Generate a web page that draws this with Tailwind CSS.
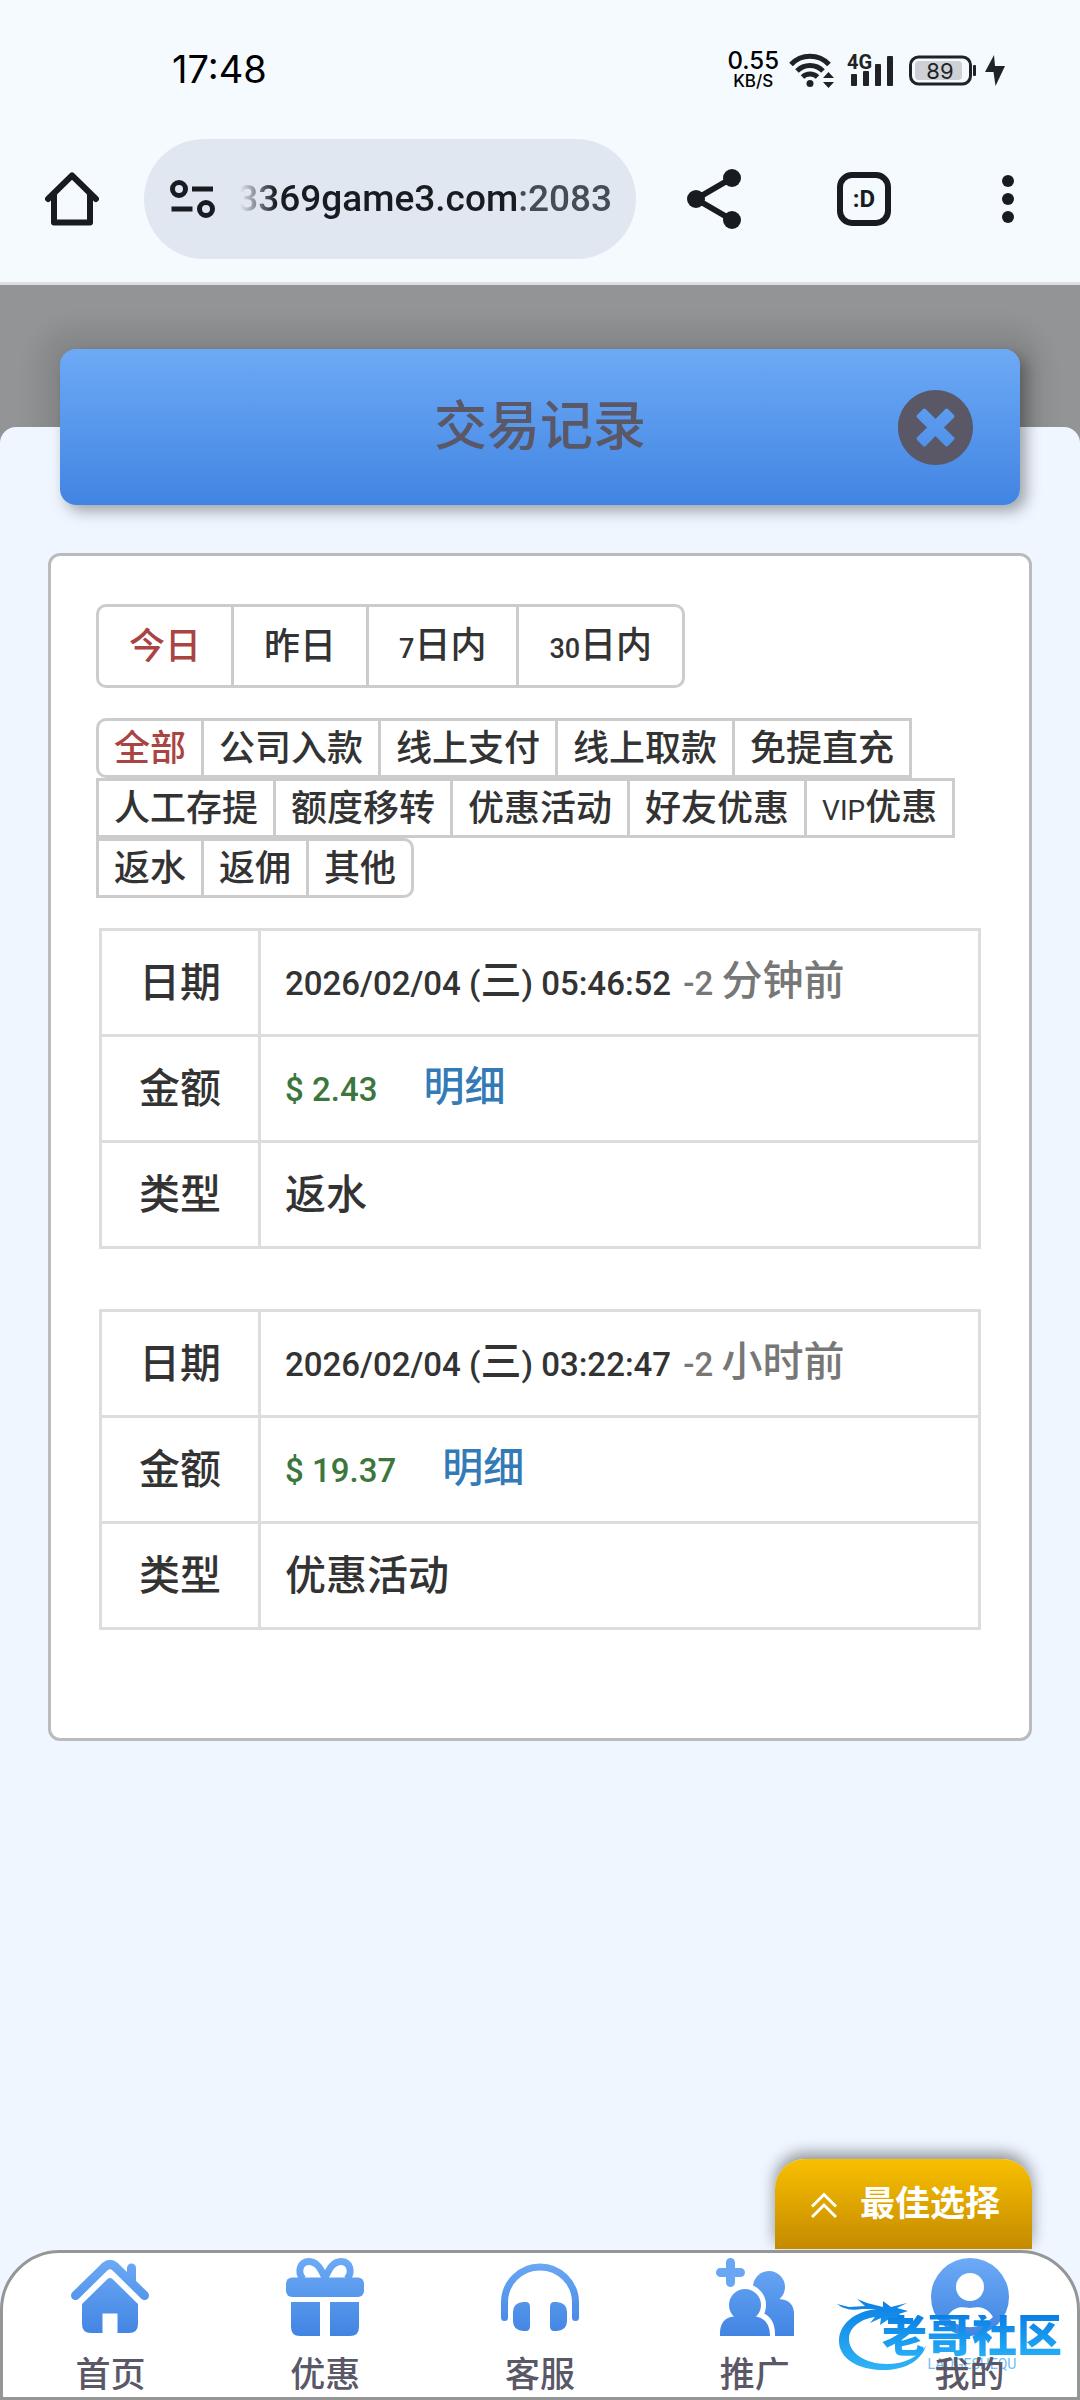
<!DOCTYPE html>
<html lang="zh-CN">
<head>
<meta charset="utf-8">
<meta name="viewport" content="width=device-width, initial-scale=1">
<title>交易记录</title>
<script src="https://cdn.jsdelivr.net/npm/@tailwindcss/browser@4"></script>
</head>
<body class="flex min-h-screen flex-col bg-[#f5faff] font-[Roboto,'Noto_Sans_CJK_SC',sans-serif] font-medium text-[#333333]">

<!-- Status bar -->
<div class="flex h-[139px] shrink-0 items-center justify-between pr-[75px] pl-[172px] text-black">
  <span class="font-[Inter,sans-serif] text-[38px] font-normal">17:48</span>
  <div class="flex items-center text-[#1f2226]">
    <div class="mr-[10px] flex flex-col items-center font-[Inter,sans-serif] text-black">
      <span class="text-[24px] leading-[22px]">0.55</span>
      <span class="text-[17px] leading-[18px]">KB/S</span>
    </div>
    <svg class="mr-3 h-9 w-[46px]" viewBox="0 0 46 36" fill="none" stroke="currentColor" stroke-width="5" aria-hidden="true">
      <path d="M2 12.500 A26 26 0 0 1 40 12.500"/><path d="M8 19 A18 18 0 0 1 34 19"/><path d="M13.500 25 A11 11 0 0 1 28.500 25"/>
      <circle cx="21" cy="31.500" r="3.500" fill="currentColor" stroke="none"/>
      <path d="M34 26 L39.500 20 L45 26Z M34 30 L39.500 36 L45 30Z" fill="currentColor" stroke="none"/>
    </svg>
    <svg class="mr-[14px] h-9 w-[48px] overflow-visible" viewBox="0 0 48 36" fill="currentColor" aria-hidden="true">
      <text x="0" y="17" font-family="Roboto" font-weight="700" font-size="20">4G</text>
      <rect x="4" y="22" width="6" height="12" rx="1"/><rect x="16" y="19" width="6" height="15" rx="1"/><rect x="28" y="12" width="6" height="22" rx="1"/><rect x="40" y="4" width="6" height="30" rx="1"/>
    </svg>
    <svg class="mr-2 h-9 w-[68px]" viewBox="0 0 68 36" fill="none" aria-hidden="true">
      <rect x="1.500" y="5" width="60" height="27" rx="8" stroke="#1f2226" stroke-width="3"/>
      <rect x="6" y="9" width="47" height="19" rx="4" fill="#cdd1d5"/>
      <rect x="64" y="13" width="3" height="11" rx="1" fill="#1f2226"/>
      <text x="31" y="27" text-anchor="middle" font-family="Inter" font-weight="400" font-size="22" fill="#1f2226">89</text>
    </svg>
    <svg class="h-9 w-5" viewBox="0 0 20 36" fill="currentColor" aria-hidden="true"><path d="M9 3 L0 20 H8.500 L10.500 34 L20 14 H10Z"/></svg>
  </div>
</div>

<!-- Browser toolbar -->
<div class="flex shrink-0 items-center border-b-3 border-[#dce0e5] pr-[60px] pb-[23px] pl-[45px] text-[#181c20]">
  <button type="button" aria-label="主页">
    <svg class="size-[54px]" viewBox="0 0 54 54" fill="none" stroke="currentColor" stroke-width="6" stroke-linejoin="round" stroke-linecap="round"><path d="M3 27 L27 3.500 L51 27"/><path d="M9 22 V50.500 H45 V22"/></svg>
  </button>
  <button type="button" class="mr-[51px] ml-[45px] flex h-[120px] min-w-0 flex-1 items-center rounded-full bg-[#e1e7f0] pr-6 pl-[26px]">
    <svg class="h-10 w-[46px] shrink-0" viewBox="0 0 46 40" fill="none" stroke="currentColor" stroke-width="5" aria-hidden="true"><circle cx="9" cy="10" r="6.500"/><circle cx="36" cy="30" r="6.500"/><path d="M22 10 H43 M1.500 30 H22.500"/></svg>
    <span class="ml-6 flex min-w-0 flex-1 justify-end overflow-hidden text-[37px] leading-[48px] whitespace-nowrap [mask-image:linear-gradient(to_right,transparent,black_36px)]">3369game3.com<span class="text-[#454c55]">:2083</span></span>
  </button>
  <button type="button" aria-label="分享">
    <svg class="h-[60px] w-[54px]" viewBox="0 0 54 60" fill="currentColor"><path d="M9 30 L45 9 M9 30 L45 51" stroke="currentColor" stroke-width="6"/><circle cx="9" cy="30" r="9"/><circle cx="45" cy="9" r="9"/><circle cx="45" cy="51" r="9"/></svg>
  </button>
  <button type="button" class="mr-[105px] ml-24 flex size-[54px] items-center justify-center rounded-[15px] border-6 border-current text-[24px] leading-6 font-bold">:D</button>
  <button type="button" aria-label="更多">
    <svg class="h-12 w-6" viewBox="0 0 24 48" fill="currentColor"><circle cx="12" cy="6" r="6"/><circle cx="12" cy="24" r="6"/><circle cx="12" cy="42" r="6"/></svg>
  </button>
</div>

<main class="relative flex flex-1 flex-col bg-[#929496] pt-[142px]">
  <!-- Soft halo behind the title bar -->
  <div class="absolute inset-x-[60px] top-16 h-[156px] rounded-2xl shadow-[0_0_20px_24px_rgba(0,0,0,0.08)]"></div>

  <div class="relative flex flex-1 flex-col rounded-t-2xl bg-[#eff6ff]">
    <header class="mx-[60px] -mt-[78px] flex h-[156px] items-center rounded-2xl bg-linear-to-b from-[#6daaf6] to-[#4184e2] px-[47px] text-[#5a5867] shadow-[6px_6px_15px_rgba(0,0,0,0.35)]">
      <h1 class="flex-1 pl-[75px] text-center text-[53px] leading-[64px]">交易记录</h1>
      <button type="button" aria-label="关闭">
        <svg class="size-[75px]" viewBox="8 8 496 496" fill="currentColor"><path d="M256 8C119 8 8 119 8 256s111 248 248 248 248-111 248-248S393 8 256 8zm121.600 313.100c4.700 4.700 4.700 12.300 0 17L338 377.600c-4.700 4.700-12.300 4.700-17 0L256 312l-65.100 65.600c-4.700 4.700-12.300 4.700-17 0L134.400 338c-4.700-4.700-4.700-12.300 0-17l65.600-65-65.600-65.100c-4.700-4.700-4.700-12.300 0-17l39.600-39.600c4.700-4.700 12.300-4.700 17 0l65 65.700 65.100-65.600c4.700-4.700 12.300-4.700 17 0l39.600 39.600c4.700 4.700 4.700 12.300 0 17L312 256z"/></svg>
      </button>
    </header>

    <section class="mx-12 mt-12 rounded-xl border-3 border-[#b9bbbd] bg-white px-[45px] pt-12 pb-[108px]">
      <!-- Date range -->
      <div class="flex pl-[3px] text-[36px] leading-[48px]" role="group" aria-label="日期范围">
        <button type="button" class="-ml-[3px] h-[84px] rounded-l-[10px] border-3 border-[#cccccc] px-[30px] pt-[2px] text-[#a94442]" aria-pressed="true">今日</button>
        <button type="button" class="-ml-[3px] h-[84px] border-3 border-[#cccccc] px-[30px] pt-[2px]">昨日</button>
        <button type="button" class="-ml-[3px] h-[84px] border-3 border-[#cccccc] px-[30px] pt-[2px]"><span class="text-[27px]">7</span>日内</button>
        <button type="button" class="-ml-[3px] h-[84px] rounded-r-[10px] border-3 border-[#cccccc] px-[30px] pt-[2px]"><span class="text-[27px]">30</span>日内</button>
      </div>

      <!-- Transaction type -->
      <div class="mt-[30px] flex flex-wrap pl-[3px] text-[36px] leading-[48px]" role="group" aria-label="交易类型">
        <button type="button" class="-ml-[3px] h-[60px] rounded-l-[10px] border-3 border-[#cccccc] px-[15px] pt-[2px] text-[#a94442]" aria-pressed="true">全部</button>
        <button type="button" class="-ml-[3px] h-[60px] border-3 border-[#cccccc] px-[15px] pt-[2px]">公司入款</button>
        <button type="button" class="-ml-[3px] h-[60px] border-3 border-[#cccccc] px-[15px] pt-[2px]">线上支付</button>
        <button type="button" class="-ml-[3px] h-[60px] border-3 border-[#cccccc] px-[15px] pt-[2px]">线上取款</button>
        <button type="button" class="-ml-[3px] h-[60px] border-3 border-[#cccccc] px-[15px] pt-[2px]">免提直充</button>
        <button type="button" class="-ml-[3px] h-[60px] border-3 border-[#cccccc] px-[15px] pt-[2px]">人工存提</button>
        <button type="button" class="-ml-[3px] h-[60px] border-3 border-[#cccccc] px-[15px] pt-[2px]">额度移转</button>
        <button type="button" class="-ml-[3px] h-[60px] border-3 border-[#cccccc] px-[15px] pt-[2px]">优惠活动</button>
        <button type="button" class="-ml-[3px] h-[60px] border-3 border-[#cccccc] px-[15px] pt-[2px]">好友优惠</button>
        <button type="button" class="-ml-[3px] h-[60px] border-3 border-[#cccccc] px-[15px] pt-[2px]"><span class="text-[28px] font-normal">VIP</span>优惠</button>
        <button type="button" class="-ml-[3px] h-[60px] border-3 border-[#cccccc] px-[15px] pt-[2px]">返水</button>
        <button type="button" class="-ml-[3px] h-[60px] border-3 border-[#cccccc] px-[15px] pt-[2px]">返佣</button>
        <button type="button" class="-ml-[3px] h-[60px] rounded-r-[10px] border-3 border-[#cccccc] px-[15px] pt-[2px]">其他</button>
      </div>

      <!-- Records -->
      <div class="mx-[3px] mt-[30px] flex flex-col gap-[60px] text-[33px] leading-[48px]">
        <table class="w-full table-fixed border-separate border-spacing-0 border-t-3 border-l-3 border-[#dddddd]">
          <colgroup><col class="w-[159px]"><col></colgroup>
          <tbody>
            <tr class="h-[106px]"><th scope="row" class="border-r-3 border-b-3 border-[#dddddd] text-center text-[41px] font-medium">日期</th><td class="border-r-3 border-b-3 border-[#dddddd] px-6">2026/02/04 (<span class="text-[41px]">三</span>) 05:46:52 <span class="ml-1 text-[#777777]">-2 <span class="text-[41px]">分钟前</span></span></td></tr>
            <tr class="h-[106px]"><th scope="row" class="border-r-3 border-b-3 border-[#dddddd] text-center text-[41px] font-medium">金额</th><td class="border-r-3 border-b-3 border-[#dddddd] px-6"><span class="text-[#3c763d]">$ 2.43</span><a href="#" class="ml-[46px] text-[41px] text-[#337ab7]">明细</a></td></tr>
            <tr class="h-[106px]"><th scope="row" class="border-r-3 border-b-3 border-[#dddddd] text-center text-[41px] font-medium">类型</th><td class="border-r-3 border-b-3 border-[#dddddd] px-6 text-[41px]">返水</td></tr>
          </tbody>
        </table>
        <table class="w-full table-fixed border-separate border-spacing-0 border-t-3 border-l-3 border-[#dddddd]">
          <colgroup><col class="w-[159px]"><col></colgroup>
          <tbody>
            <tr class="h-[106px]"><th scope="row" class="border-r-3 border-b-3 border-[#dddddd] text-center text-[41px] font-medium">日期</th><td class="border-r-3 border-b-3 border-[#dddddd] px-6">2026/02/04 (<span class="text-[41px]">三</span>) 03:22:47 <span class="ml-1 text-[#777777]">-2 <span class="text-[41px]">小时前</span></span></td></tr>
            <tr class="h-[106px]"><th scope="row" class="border-r-3 border-b-3 border-[#dddddd] text-center text-[41px] font-medium">金额</th><td class="border-r-3 border-b-3 border-[#dddddd] px-6"><span class="text-[#3c763d]">$ 19.37</span><a href="#" class="ml-[46px] text-[41px] text-[#337ab7]">明细</a></td></tr>
            <tr class="h-[106px]"><th scope="row" class="border-r-3 border-b-3 border-[#dddddd] text-center text-[41px] font-medium">类型</th><td class="border-r-3 border-b-3 border-[#dddddd] px-6 text-[41px]">优惠活动</td></tr>
          </tbody>
        </table>
      </div>
    </section>

    <button type="button" class="mt-auto mr-12 mb-px flex h-[90px] items-center self-end rounded-t-[30px] bg-linear-to-b from-[#f9c000] to-[#c48a00] pr-8 pl-9 pt-[2px] text-[35px] leading-[48px] font-bold text-white shadow-[0_-6px_15px_rgba(0,0,0,0.4)]">
      <svg class="mr-[23px] h-[26px] w-[26px]" viewBox="0 0 26 26" fill="none" stroke="currentColor" stroke-width="3" aria-hidden="true"><path d="M1 14.500 L13 2.500 L25 14.500 M1 25 L13 13 L25 25"/></svg>
      最佳选择
    </button>

    <nav class="relative flex rounded-t-[60px] border-3 border-[#959797] bg-white pt-[5px] text-[35px] leading-[42px] text-[#5a5867]">
      <svg width="0" height="0" class="absolute" aria-hidden="true"><defs><linearGradient id="blue" gradientUnits="userSpaceOnUse" x1="0" y1="0" x2="0" y2="78"><stop offset="0" stop-color="#6daaf6"/><stop offset="1" stop-color="#4184e2"/></linearGradient></defs></svg>
      <a href="#" class="flex flex-1 flex-col items-center gap-[19px]">
        <svg class="size-[78px]" viewBox="0 0 78 78" fill="url(#blue)" aria-hidden="true"><path d="M4.500 37.500 L34 8.500 Q39 4.500 44 8.500 L73.500 37.500" fill="none" stroke="url(#blue)" stroke-width="9" stroke-linecap="round"/><path d="M56 22 V10 a4.500 4.500 0 0 1 9 0 V31Z"/><path d="M36.500 21 Q39 19 41.500 21 L67 46 V66 Q67 75 58 75 H46.500 V55.500 H31.500 V75 H20 Q11 75 11 66 V46Z"/></svg>首页
      </a>
      <a href="#" class="flex flex-1 flex-col items-center gap-[19px]">
        <svg class="size-[78px]" viewBox="0 0 78 78" fill="url(#blue)" aria-hidden="true"><rect y="19.500" width="78" height="19.500" rx="6"/><path d="M5 44 H34 V78 H14 Q5 78 5 69Z M44 44 H73 V69 Q73 78 64 78 H44Z"/><path d="M17 21 C11 14 14 3.500 23 3.500 C31 3.500 35 11 39 20 C43 11 47 3.500 55 3.500 C64 3.500 67 14 61 21" fill="none" stroke="url(#blue)" stroke-width="7"/></svg>优惠
      </a>
      <a href="#" class="flex flex-1 flex-col items-center gap-[19px]">
        <svg class="size-[78px]" viewBox="0 0 78 78" fill="url(#blue)" aria-hidden="true"><path d="M3.500 59.500 V44.500 A35.500 35.500 0 0 1 74.500 44.500 V59.500" fill="none" stroke="url(#blue)" stroke-width="7" stroke-linecap="round"/><path d="M22 44 H25 Q29 44 29 49 V68 Q29 73 25 73 H22 Q12 72 12 63 V54 Q12 45 22 44Z M56 44 H53 Q49 44 49 49 V68 Q49 73 53 73 H56 Q66 72 66 63 V54 Q66 45 56 44Z"/></svg>客服
      </a>
      <a href="#" class="flex flex-1 flex-col items-center gap-[19px]">
        <svg class="size-[78px]" viewBox="0 0 78 78" fill="url(#blue)" aria-hidden="true"><path d="M14.500 4.500 V24.500 M4.500 14.500 H24.500" fill="none" stroke="#69a7f4" stroke-width="9" stroke-linecap="round"/><circle cx="53" cy="29" r="16"/><path d="M44 38 L63 41 Q78 42 78 56 V78 H50Z"/><g stroke="white" stroke-width="10" stroke-linejoin="round"><circle cx="29" cy="47" r="16"/><path d="M4 84 V76 Q4 60 18 58 H40 Q54 61 54 76 V84Z"/></g><circle cx="29" cy="47" r="16"/><path d="M4 78 Q3 60 18 58.500 H40 Q54 61 54 78Z"/></svg>推广
      </a>
      <a href="#" class="flex flex-1 flex-col items-center gap-[19px]">
        <svg class="size-[78px]" viewBox="0 0 78 78" fill="url(#blue)" aria-hidden="true"><circle cx="39" cy="39" r="39"/><circle cx="39" cy="29" r="14" fill="white"/><path d="M16 59 C22 49 29 48 39 50 C49 48 56 49 62 59 C48 72.500 30 72.500 16 59Z" fill="white"/></svg><span class="relative z-10">我的</span>
      </a>

      <!-- Community badge -->
      <div class="pointer-events-none absolute top-[46px] right-[15px] flex text-[#1793ee]">
        <svg class="-mr-[47px] h-[76px] w-[92px]" viewBox="0 0 92 76" aria-hidden="true"><defs><linearGradient id="dragon" x1="0" y1="0" x2="0" y2="1"><stop offset="0" stop-color="#0b7fe4"/><stop offset="1" stop-color="#2fb4f6"/></linearGradient></defs><path d="M40 10 C18 12 2 25 2 42 C2 60 22 72 50 71 C70 70 84 61 89 47 C80 59 66 65 50 65 C28 65 12 54 12 40 C12 28 24 20 38 18 L33 24 L44 19 L43 26 L52 20 L58 25 L60 19 L69 22 L62 15 L71 12 L60 9 L70 4 L54 8 L46 2 L46 8 L30 4 L20 0 L28 7 L12 8 L0 5 Q10 13 25 10Z" fill="url(#dragon)"/></svg>
        <div class="flex flex-col items-center pt-[16px]">
          <span class="bg-linear-to-b from-[#0b7fe4] to-[#27b0f8] bg-clip-text text-[45px] leading-[44px] font-black text-transparent">老哥社区</span>
          <span class="text-[14px] leading-[10px] font-normal text-[#6dbdf3]">LAOGESHEQU</span>
        </div>
      </div>
    </nav>
  </div>
</main>
</body>
</html>
